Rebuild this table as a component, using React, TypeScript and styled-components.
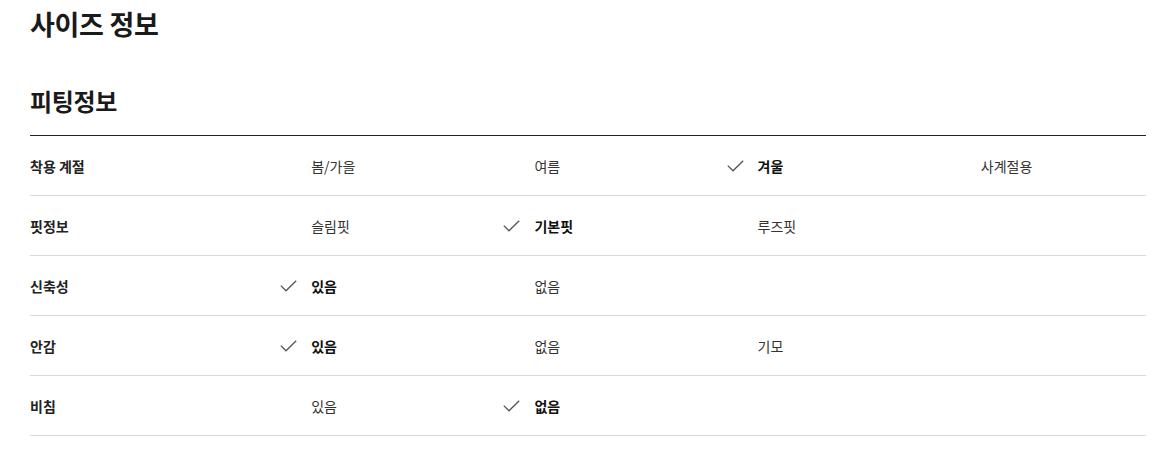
import React from 'react';
import styled, { createGlobalStyle } from 'styled-components';

type Row = {
  label: string;
  options: string[];
  selected: number;
};

const rows: Row[] = [
  { label: '착용 계절', options: ['봄/가을', '여름', '겨울', '사계절용'], selected: 2 },
  { label: '핏정보', options: ['슬림핏', '기본핏', '루즈핏'], selected: 1 },
  { label: '신축성', options: ['있음', '없음'], selected: 0 },
  { label: '안감', options: ['있음', '없음', '기모'], selected: 0 },
  { label: '비침', options: ['있음', '없음'], selected: 1 },
];

const GlobalStyle = createGlobalStyle`
  body {
    margin: 0;
    background: #fff;
    font-family: "Noto Sans CJK KR", "Noto Sans", sans-serif;
    color: #222;
  }
`;

const Page = styled.div`
  padding: 5px 15px 0 30px;
`;

const Title = styled.h1`
  margin: 0;
  font-size: 27px;
  line-height: 38px;
  font-weight: 700;
  color: #1a1a1a;
  letter-spacing: -0.3px;
`;

const SubTitle = styled.h2`
  margin: 42px 0 0;
  font-size: 24px;
  line-height: 32px;
  font-weight: 700;
  color: #1a1a1a;
  letter-spacing: -0.3px;
`;

const Table = styled.div`
  margin-top: 18px;
  border-top: 1px solid #222;
`;

const TableRow = styled.div`
  display: grid;
  grid-template-columns: repeat(5, 1fr);
  height: 59px;
  align-items: center;
  border-bottom: 1px solid #d9d9d9;
`;

const Label = styled.div`
  font-size: 14px;
  font-weight: 700;
  color: #222;
`;

const Option = styled.div<{ $on: boolean }>`
  display: flex;
  align-items: center;
  gap: 14px;
  padding-left: 27px;
  font-size: 14px;
  font-weight: ${(p) => (p.$on ? 700 : 400)};
  color: ${(p) => (p.$on ? '#111' : '#333')};
`;

const CheckSlot = styled.span`
  display: flex;
  width: 17px;
  height: 12px;
`;

const Check = () => (
  <svg width="17" height="12" viewBox="0 0 17 12" fill="none">
    <path d="M0.8 5.6 L6 10.8 L16.2 0.8" stroke="#555" strokeWidth="1.3" />
  </svg>
);

export default function App() {
  return (
    <>
      <GlobalStyle />
      <Page>
        <Title>사이즈 정보</Title>
        <SubTitle>피팅정보</SubTitle>
        <Table>
          {rows.map((r) => (
            <TableRow key={r.label}>
              <Label>{r.label}</Label>
              {r.options.map((o, i) => (
                <Option key={o} $on={i === r.selected}>
                  <CheckSlot>{i === r.selected && <Check />}</CheckSlot>
                  {o}
                </Option>
              ))}
            </TableRow>
          ))}
        </Table>
      </Page>
    </>
  );
}
